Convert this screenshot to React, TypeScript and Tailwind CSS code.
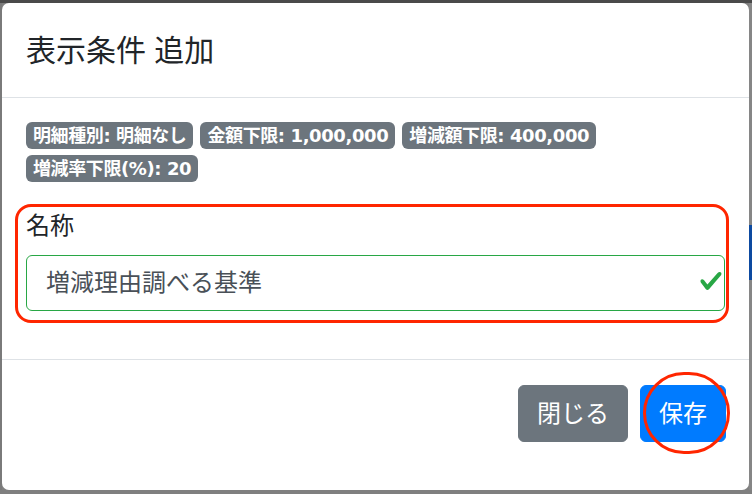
const font = { fontFamily: '"Liberation Sans", "Noto Sans CJK JP", sans-serif' };
const badgeFont = { fontFamily: '"DejaVu Sans", "Noto Sans CJK JP", sans-serif' };

const badges = [
  '明細種別: 明細なし',
  '金額下限: 1,000,000',
  '増減額下限: 400,000',
  '増減率下限(%): 20',
];

function Badge({ text }: { text: string }) {
  return (
    <span
      className="inline-flex h-[27px] items-center rounded-[6px] bg-[#6c757d] px-[7px] text-[18px] font-bold leading-none tracking-[-0.4px] text-white"
      style={badgeFont}
    >
      {text}
    </span>
  );
}

export default function App() {
  return (
    <div
      className="flex h-[494px] w-[752px] flex-col overflow-hidden bg-[#808080]"
      style={font}
    >
      <div className="h-[3px] shrink-0 bg-[#4a4a4a]" />
      <div className="flex flex-1">
        <div className="w-[2px] shrink-0 bg-[#7a7a7a]" />
        <div className="flex h-[487px] w-[747px] flex-col rounded-[7px] bg-white">
          {/* header */}
          <div className="flex h-[95px] items-center border-b border-[#dee2e6] px-[24px]">
            <h5 className="text-[30px] leading-[45px] font-normal text-[#212529]">
              表示条件 追加
            </h5>
          </div>

          {/* body */}
          <div className="px-[24px] pt-[24px] pb-[24px]">
            <div className="flex w-[620px] flex-wrap gap-x-[7px] gap-y-[6px]">
              {badges.map((b) => (
                <Badge key={b} text={b} />
              ))}
            </div>

            <div className="relative mt-[26px] mb-[24px]">
              <label className="block text-[24px] leading-[36px] text-[#212529]">
                名称
              </label>
              <div className="relative mt-[11px] flex h-[56px] items-center rounded-[6px] border border-[#28a745] pl-[19px]">
                <span className="text-[24px] leading-[36px] text-[#495057]">
                  増減理由調べる基準
                </span>
                <svg
                  className="absolute right-[1px] top-[13px]"
                  width="24"
                  height="24"
                  viewBox="0 0 8 8"
                >
                  <path
                    fill="#28a745"
                    d="M2.3 6.73L.6 4.53c-.4-1.04.46-1.4 1.1-.8l1.1 1.4 3.4-3.8c.6-.63 1.6-.27 1.2.7l-4 4.6c-.43.5-.8.4-1.1.1z"
                  />
                </svg>
              </div>
              <div className="pointer-events-none absolute -top-[4px] -right-[4px] -bottom-[12px] -left-[11px] rounded-[16px] border-[3px] border-[#ff2600]" />
            </div>
          </div>

          {/* footer */}
          <div className="flex flex-1 items-start justify-end gap-[12px] border-t border-[#dee2e6] pt-[25px] pr-[23px]">
            <button className="h-[57px] rounded-[6px] border border-[#6c757d] bg-[#6c757d] px-[18px] text-[24px] leading-[36px] text-white">
              閉じる
            </button>
            <div className="relative">
              <button className="h-[57px] rounded-[6px] border border-[#007bff] bg-[#007bff] px-[18px] text-[24px] leading-[36px] text-white">
                保存
              </button>
              <div className="pointer-events-none absolute left-[3px] -top-[13px] h-[82px] w-[87px] rounded-full border-[3px] border-[#ff2600]" />
            </div>
          </div>
        </div>
        <div className="flex w-[3px] shrink-0 flex-col bg-[#868686]">
          <div className="h-[222px]" />
          <div className="h-[55px] bg-[#0d4aa0]" />
        </div>
      </div>
      <div className="h-[4px] shrink-0 bg-[#7f7f7f]" />
    </div>
  );
}
